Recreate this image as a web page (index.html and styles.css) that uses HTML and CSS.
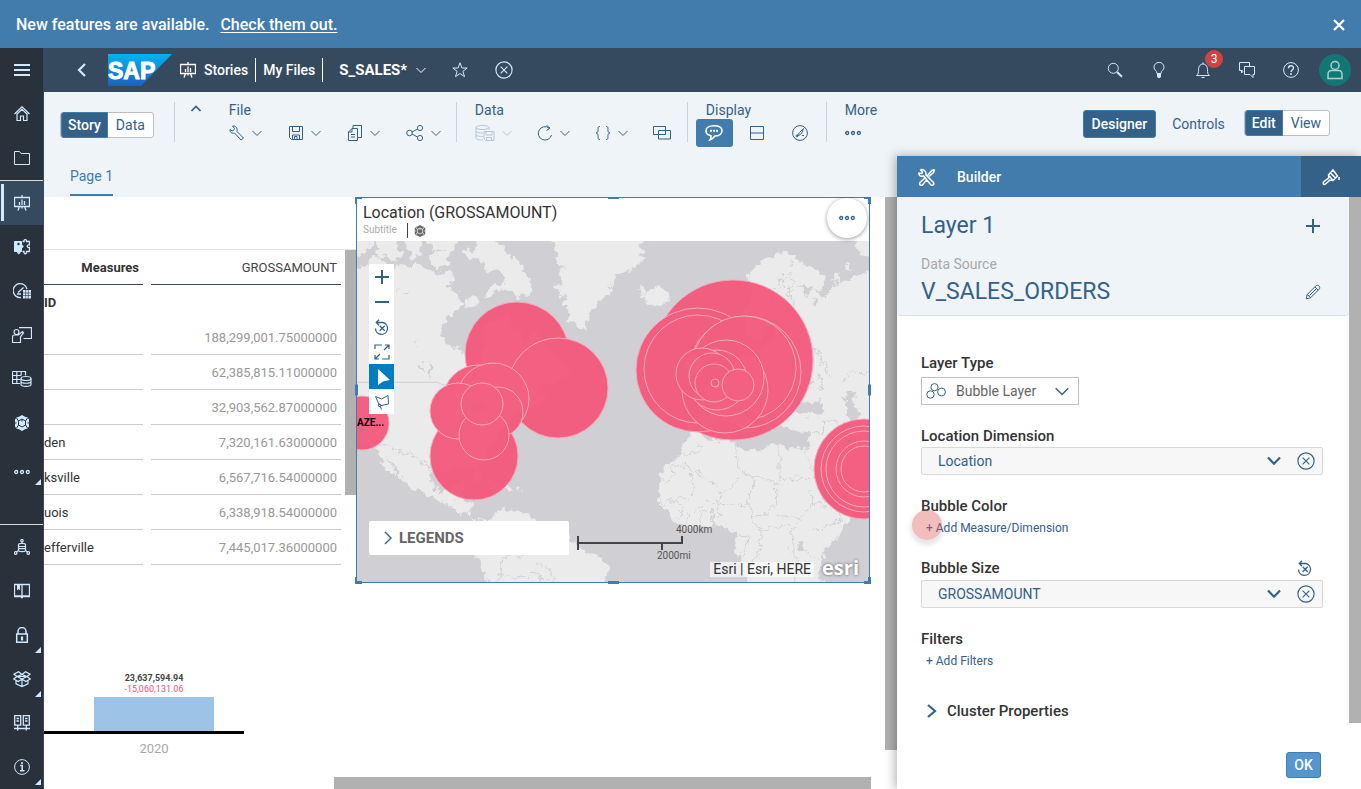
FILE: index.html
```html
<!DOCTYPE html>
<html lang="en">
<head>
<meta charset="utf-8">
<meta name="viewport" content="width=device-width, initial-scale=1">
<title>S_SALES - Stories</title>
<link rel="stylesheet" href="styles.css">
</head>
<body>
<svg class="defs" aria-hidden="true">
  <symbol id="i-menu" viewBox="0 0 16 16"><path d="M0 3h16M0 8h16M0 13h16" stroke-width="2"/></symbol>
  <symbol id="i-home" viewBox="0 0 16 16"><path d="M.5 8 8 .8 15.500 8M3 7.500v7h3.500v-4.500h3v4.500H13v-7M2.500 8.500 8 3.300l5.500 5.200" stroke-width="1.200"/></symbol>
  <symbol id="i-folder" viewBox="0 0 16 16"><path d="M.5 14.500v-13h5l1.500 2h8.500v11z"/></symbol>
  <symbol id="i-story" viewBox="0 0 16 16"><path d="M.5 2.500h15v9H.5zM8 0v2.500M5.500 11.500 4 15.500M10.500 11.500l1.500 4M5.500 7v3M8 4.500V10M10.500 6v4M8 11.500v2" stroke-width="1.300"/></symbol>
  <symbol id="i-puzzle" viewBox="0 0 16 16"><path d="M.5 2.500h7v4c2-1 2.500 2.500 0 2v4H6c.5 3-3 3-2.500 0h-3z" fill="currentColor"/><circle cx="4.500" cy="5" r="1.200" fill="#29313a" stroke="none"/><path d="M8.500 2.500H10c-.5-2.500 3-2.500 2.500 0h3v3.500c-3-1-3 3 0 2.500v4h-3c.5 3-3 3-2.500 0H8.500" stroke-width="1.300"/></symbol>
  <symbol id="i-gauge" viewBox="0 0 18 16"><path d="M8 14.500A7 7 0 1 1 14 6M5 9.500l5.500-5M4 11h4" stroke-width="1.300"/><path d="M10 7h8v8.500h-8z" fill="currentColor" stroke="none"/><path d="M10 10h8M10 12.500h8M12.700 7v9M15.300 7v9" stroke="#29313a" stroke-width=".6"/></symbol>
  <symbol id="i-present" viewBox="0 0 20 16"><g stroke-width="1.200"><circle cx="4.500" cy="5" r="2.500"/><path d="M.5 15.500V10c0-1.500 1-2 2-2h4l4-3.500 1 1.200L8.500 10v5.500zM7 .7h12.500v10.800h-8"/></g></symbol>
  <symbol id="i-tabledb" viewBox="0 0 20 16"><g stroke-width="1.200"><path d="M.5.5h13v4M.5.5v12H8M.5 4.500H9M.5 8.500H8M4.800.5v12M9.200.5v4"/><ellipse cx="14" cy="7.500" rx="5" ry="2"/><path d="M9 7.500v6c0 2.500 10 2.500 10 0v-6M9 10.500c0 2.300 10 2.300 10 0"/></g></symbol>
  <symbol id="i-hex" viewBox="0 0 16 16"><path d="m8 0 3 1.700 2.500.8L15 4.500v7l-1.500 2-2.500.8L8 16l-3-1.700-2.500-.8L1 11.500v-7l1.500-2L5 1.700z" fill="currentColor" stroke="none"/><path class="cut" d="m8 4 3.500 2v4L8 12l-3.500-2V6zM8 4V6.500M4.500 6 2.500 3M11.500 6l2-3M4.500 10l-2 3M11.500 10l2 3M1 8h1.500M13.500 8H15" stroke-width="1"/></symbol>
  <symbol id="i-dots" viewBox="0 0 16 16"><g stroke-width="1.300"><circle cx="2.200" cy="8" r="1.500"/><circle cx="8" cy="8" r="1.500"/><circle cx="13.800" cy="8" r="1.500"/></g></symbol>
  <symbol id="i-dblinks" viewBox="0 0 16 16"><g stroke-width="1.200"><circle cx="8" cy="1.700" r="1.200"/><circle cx="1.700" cy="14" r="1.300"/><circle cx="14.300" cy="14" r="1.300"/><path d="M8 3v1.500M2.500 13 5 11M13.500 13 11 11M4.500 5.500c0-1.500 7-1.500 7 0v6c0 1.500-7 1.500-7 0zM4.500 7.500h7M4.500 9.700h7"/></g></symbol>
  <symbol id="i-book" viewBox="0 0 16 16"><path d="M.5 1.500h15v12H.5zM8 1.500v13M7 14.500h2M0 13h16" stroke-width="1.300"/><path d="M3 1.500h3v6L4.500 6 3 7.500z" fill="currentColor" stroke="none"/></symbol>
  <symbol id="i-lock" viewBox="0 0 16 16"><path d="M2.700 7h10.600v8.300H2.700zM4 7V4.500a4 4 0 0 1 8 0V7" stroke-width="1.500"/><path d="M8 9.500v4" stroke-width="2.200"/></symbol>
  <symbol id="i-box" viewBox="0 0 18 16"><path d="M9 3.500 5.500.7 1 3.200l3 2.300zM9 3.500 12.500.7 17 3.200l-3 2.300zM4 5.500.7 8l4.500 2.500L9 8zM14 5.500 17.300 8l-4.500 2.500L9 8zM3 9.500v3.300l6 2.700 6-2.700V9.500M9 8v7.500M4 5.500h10" stroke-width="1.200"/></symbol>
  <symbol id="i-servers" viewBox="0 0 16 16"><path d="M.7.700h6v9.500h-6zM9.300.7h6v9.500h-6zM3.700 10.500v5M12.300 10.500v5M0 13.500h16M2.500 3.500h2.500M2.500 6h2.500M11 3.500h2.500M11 6h2.500" stroke-width="1.300"/></symbol>
  <symbol id="i-info" viewBox="0 0 16 16"><circle cx="8" cy="8" r="7.400"/><path d="M6.200 6.500h2v5M6 11.800h4.500" stroke-width="1.500"/><circle cx="8" cy="4" r="1.100" fill="currentColor" stroke="none"/></symbol>
  <symbol id="i-down" viewBox="0 0 10 10"><path d="m.5 3 4.500 4.500L9.500 3"/></symbol>
  <symbol id="i-downb" viewBox="0 0 14 10"><path d="m1 1.500 6 6.200 6-6.200" stroke-width="2.200"/></symbol>
  <symbol id="i-star" viewBox="0 0 16 16"><path d="m8 .8 1.900 5.200h5.300l-4.300 3.300 1.600 5.400L8 11.500l-4.500 3.200 1.600-5.400L.8 6h5.300z"/></symbol>
  <symbol id="i-cancel" viewBox="0 0 16 16"><circle cx="8" cy="8" r="7.200"/><path d="m5 5 6 6M11 5l-6 6"/></symbol>
  <symbol id="i-search" viewBox="0 0 16 16"><circle cx="6.300" cy="6.300" r="5"/><path d="m10 10 5 4.700" stroke-width="2"/></symbol>
  <symbol id="i-bulb" viewBox="0 0 16 16"><path d="M6 11.500c0-3-3-3.500-3-6.200a5 5 0 0 1 10 0c0 2.700-3 3.200-3 6.200z"/><path d="M6 12h4v2.500L9 16H7l-1-1.500z" fill="currentColor" stroke="none"/></symbol>
  <symbol id="i-bell" viewBox="0 0 16 16"><path d="M1.500 13.500c2-1.500 2-3 2-6C3.500 4 5.500 2 8 2s4.500 2 4.500 5.500c0 3 0 4.500 2 6zM8 .3V2M6.500 15.500h3"/></symbol>
  <symbol id="i-chat" viewBox="0 0 16 16"><path d="M3.500 9.500v-1h-3v-8h10V4M5.500 4.500h10v8H14v3l-3-3H5.500zM2.500 8.500V11L4 9.500"/></symbol>
  <symbol id="i-help" viewBox="0 0 16 16"><circle cx="8" cy="8" r="7.400"/><path d="M5.500 6.300C5.500 3 10.500 3 10.500 6c0 2-2.500 2-2.500 4" stroke-width="1.400"/><circle cx="8" cy="12" r="1" fill="currentColor" stroke="none"/></symbol>
  <symbol id="i-user" viewBox="0 0 16 20"><circle cx="8" cy="5.500" r="4"/><path d="M1 18.500v-4c0-2.500 1.500-4 3.500-4h7c2 0 3.500 1.500 3.500 4v4z"/></symbol>
  <symbol id="i-wrench" viewBox="0 0 16 16"><path d="M1 4.500C.5 7 3 9 5.500 8l6.500 7 2.500-2L8 6.500C9 3 6.500.5 3.500 1l2 2.500L4.500 5.500 3 6z"/></symbol>
  <symbol id="i-save" viewBox="0 0 16 16"><path d="M1.500 1.500h13v13h-11l-2-2zM4.500 1.500v5h7v-5M4.500 14.500V10h7v4.500M6.500 14v-2.500H9V14"/></symbol>
  <symbol id="i-copy" viewBox="0 0 16 16"><path d="M1.500 7 5 3.500h5.500v12h-9zM1.500 7H5V3.500M4 9.500h4M4 12h4M6 3.500V.5h8.500v12h-4"/></symbol>
  <symbol id="i-share" viewBox="0 0 18 16"><circle cx="3.500" cy="8" r="2.800"/><circle cx="14" cy="3" r="2.600"/><circle cx="14" cy="13" r="2.600"/><path d="m6 7 5.500-3M6 9l5.500 3"/></symbol>
  <symbol id="i-dbsave" viewBox="0 0 20 16"><ellipse cx="7.500" cy="2.500" rx="6.500" ry="2"/><path d="M1 2.500v10.500C1 14.500 4 15 8 15M14 2.500V5M1 6c0 1.500 3 2 7 2M1 9.500c0 1.500 3 2 7 2M9 6.500h10v9H10.500L9 14zM11 6.500v3.500h6V6.500M11.500 15.500v-3h5v3"/></symbol>
  <symbol id="i-refresh" viewBox="0 0 16 16"><path d="M12 3A6.700 6.700 0 1 0 14.500 10M9.500 0.300 13 3l-3.500 2.500"/></symbol>
  <symbol id="i-braces" viewBox="0 0 16 16"><path d="M5 1.500c-3 0-1.500 2.500-2 4.500-.2 1.200-1 2-2 2 1 0 1.800.8 2 2 .5 2-1 4.500 2 4.500M11 1.500c3 0 1.500 2.500 2 4.500.2 1.200 1 2 2 2-1 0-1.800.8-2 2-.5 2 1 4.500-2 4.500"/></symbol>
  <symbol id="i-overlap" viewBox="0 0 18 16"><path d="M.5 1.500h12v8H.5z"/><path d="M5.500 5.500h12v8.500h-12z"/></symbol>
  <symbol id="i-comment" viewBox="0 0 18 16"><path d="M9 .8c5 0 8 2 8 5s-3 5.200-7 5.200c-1.500 1.800-3 3.500-5 4 .8-1 1.200-2.700 1-4.300C2.500 10 1 8.300 1 5.800c0-3 3-5 8-5z" stroke-width="1.600"/><path d="M5 5.800h2M8 5.800h2M11 5.800h2" stroke-width="2"/></symbol>
  <symbol id="i-split" viewBox="0 0 16 16"><path d="M1.500 1.500h13v13h-13z"/><path d="M1.500 8h13" stroke-opacity=".5" stroke-width="2"/></symbol>
  <symbol id="i-compass" viewBox="0 0 16 16"><circle cx="8" cy="8" r="7.400"/><path d="m11.500 3.500-4 4L4.500 12l5-3.500zM3.500 11l2-1.500M10 10.500h2"/></symbol>
  <symbol id="i-tools" viewBox="0 0 18 18"><path d="M2.200 1.500 4.500 4 4 5.500 1 5C.5 7.500 3 9 5.500 8l7.500 9c1.500 1 3.500-.5 2.500-2.500L8 7c.5-3.500-2-6-5-5.500M16.500 1.500l-2.500 1-5 5.500M7 10l-5 4.500c-1 2 .5 3.500 2.500 2.500L9 11.500M16.500 1.500l-1 3-4.500 4" stroke-width="1.500"/></symbol>
  <symbol id="i-brush" viewBox="0 0 18 18"><path d="M6.500 7 11 2l4.500 6-4.500 4.500zM8.500 5l5.500 5.500M7 8l-.5 2L1.500 14c-1 2 .5 3 2 2L8 12l2.500.5M17 9v3" stroke-width="1.500"/></symbol>
  <symbol id="i-plus" viewBox="0 0 16 16"><path d="M8 1v14M1 8h14" stroke-width="2"/></symbol>
  <symbol id="i-minus" viewBox="0 0 16 16"><path d="M1 8h14" stroke-width="2"/></symbol>
  <symbol id="i-pencil" viewBox="0 0 16 16"><path d="m1.200 14.800 1-4.300 9-9c2-1 4.300 1 3.300 3.300l-9 9zM10 3l3.200 3.200M2.500 10.500l3 3M4.500 11.500l6.500-6.500"/></symbol>
  <symbol id="i-bubbles" viewBox="0 0 20 16"><circle cx="8.500" cy="4.200" r="3.600"/><circle cx="4.500" cy="11.500" r="3.700"/><circle cx="15.500" cy="9" r="3.900"/></symbol>
  <symbol id="i-reset" viewBox="0 0 16 16"><path d="M2.500 3.500H9a6 6 0 1 1-7.500 6M5 .8 2.300 3.500 5 6.200M5.700 6.700l5 5M10.700 6.700l-5 5" stroke-width="1.300"/></symbol>
  <symbol id="i-expand" viewBox="0 0 16 16"><path d="M1 5V1h7M15 11v4H8M11 1h4v4M15 1l-5 5M5 15H1v-4M1 15l5-5" stroke-width="1.200"/></symbol>
  <symbol id="i-lasso" viewBox="0 0 16 16"><path d="M1.500 2.500 7.500 5l6.500-3.500.5 8.500L7 11.500l-2-1zM5 10c2 0 2.500 2 1 2.500s-2.500-1-1-2.500zM6 12l1.500 3.500"/></symbol>
</svg>

<div class="banner">
  <p>New features are available. <a href="#features">Check them out.</a></p>
  <button type="button" class="banner-close" aria-label="Close"><svg class="ico12" viewBox="0 0 12 12"><path d="m1 1 10 10M11 1 1 11" stroke-width="2.200"/></svg></button>
</div>

<div class="app">
  <nav class="side" aria-label="Main">
    <div class="side-top">
      <button type="button" aria-label="Menu"><svg class="ico16"><use href="#i-menu"/></svg></button>
      <button type="button" aria-label="Home"><svg class="ico16"><use href="#i-home"/></svg></button>
      <button type="button" aria-label="Files"><svg class="ico16"><use href="#i-folder"/></svg></button>
    </div>
    <div class="side-mid">
      <button type="button" class="current" aria-label="Stories"><svg class="ico16"><use href="#i-story"/></svg></button>
      <button type="button" aria-label="Applications"><svg class="ico16"><use href="#i-puzzle"/></svg></button>
      <button type="button" aria-label="Dashboards"><svg class="ico18"><use href="#i-gauge"/></svg></button>
      <button type="button" aria-label="Boardroom"><svg class="ico20"><use href="#i-present"/></svg></button>
      <button type="button" aria-label="Datasets"><svg class="ico20"><use href="#i-tabledb"/></svg></button>
      <button type="button" aria-label="Modeler"><svg class="ico16"><use href="#i-hex"/></svg></button>
      <button type="button" class="more low" aria-label="More"><svg class="ico16"><use href="#i-dots"/></svg></button>
    </div>
    <div class="side-end">
      <button type="button" aria-label="Connections"><svg class="ico16"><use href="#i-dblinks"/></svg></button>
      <button type="button" aria-label="Catalog"><svg class="ico16"><use href="#i-book"/></svg></button>
      <button type="button" class="more" aria-label="Security"><svg class="ico16"><use href="#i-lock"/></svg></button>
      <button type="button" class="more" aria-label="Transport"><svg class="ico18"><use href="#i-box"/></svg></button>
      <button type="button" aria-label="Systems"><svg class="ico16"><use href="#i-servers"/></svg></button>
      <button type="button" class="more" aria-label="About"><svg class="ico16"><use href="#i-info"/></svg></button>
    </div>
  </nav>

  <div class="main">
    <header class="shell">
      <button type="button" class="back" aria-label="Back"><svg class="ico14" viewBox="0 0 14 14"><path d="m10 1-6 6 6 6" stroke-width="2.200"/></svg></button>
      <svg class="logo" viewBox="0 0 64 32" role="img" aria-label="SAP">
        <defs><linearGradient id="sap" x1="0" y1="0" x2="0" y2="1"><stop offset="0" stop-color="#02b5f0"/><stop offset="1" stop-color="#1f5fc0"/></linearGradient></defs>
        <path d="M0 0h64L33 32H0z" fill="url(#sap)" stroke="none"/>
        <text class="logo-text" x="0" y="25">SAP</text>
      </svg>
      <a class="crumb crumb-icon" href="#stories"><svg class="ico16"><use href="#i-story"/></svg>Stories</a>
      <a class="crumb crumb-next" href="#files">My Files</a>
      <button type="button" class="doc">S_SALES* <svg class="ico10"><use href="#i-down"/></svg></button>
      <button type="button" class="icon-btn fav" aria-label="Favorite"><svg class="ico16"><use href="#i-star"/></svg></button>
      <button type="button" class="icon-btn" aria-label="Close story"><svg class="ico18"><use href="#i-cancel"/></svg></button>
      <div class="shell-end">
        <button type="button" class="icon-btn" aria-label="Search"><svg class="ico16"><use href="#i-search"/></svg></button>
        <button type="button" class="icon-btn" aria-label="Tips"><svg class="ico16"><use href="#i-bulb"/></svg></button>
        <button type="button" class="icon-btn bell" aria-label="Notifications"><svg class="ico16"><use href="#i-bell"/></svg><span class="badge">3</span></button>
        <button type="button" class="icon-btn" aria-label="Discussions"><svg class="ico16"><use href="#i-chat"/></svg></button>
        <button type="button" class="icon-btn" aria-label="Help"><svg class="ico16"><use href="#i-help"/></svg></button>
        <button type="button" class="avatar" aria-label="Profile"><svg class="user"><use href="#i-user"/></svg></button>
      </div>
    </header>

    <div class="toolbar">
      <div class="segment"><button type="button" class="on">Story</button><button type="button">Data</button></div>
      <div class="fold"><button type="button" aria-label="Collapse toolbar"><svg class="ico10" viewBox="0 0 10 10"><path d="M.5 7 5 2.500 9.500 7" stroke-width="1.700"/></svg></button></div>
      <section class="tools tools-file">
        <h2>File</h2>
        <div class="tool-row">
          <button type="button" aria-label="Settings"><svg class="ico16"><use href="#i-wrench"/></svg><svg class="ico10"><use href="#i-down"/></svg></button>
          <button type="button" aria-label="Save"><svg class="ico16"><use href="#i-save"/></svg><svg class="ico10"><use href="#i-down"/></svg></button>
          <button type="button" aria-label="Copy"><svg class="ico16"><use href="#i-copy"/></svg><svg class="ico10"><use href="#i-down"/></svg></button>
          <button type="button" aria-label="Share"><svg class="ico18"><use href="#i-share"/></svg><svg class="ico10"><use href="#i-down"/></svg></button>
        </div>
      </section>
      <section class="tools tools-data">
        <h2>Data</h2>
        <div class="tool-row">
          <button type="button" disabled aria-label="Save data"><svg class="ico20"><use href="#i-dbsave"/></svg><svg class="ico10"><use href="#i-down"/></svg></button>
          <button type="button" aria-label="Refresh"><svg class="ico16"><use href="#i-refresh"/></svg><svg class="ico10"><use href="#i-down"/></svg></button>
          <button type="button" aria-label="Variables"><svg class="ico16"><use href="#i-braces"/></svg><svg class="ico10"><use href="#i-down"/></svg></button>
          <button type="button" aria-label="Linked analysis"><svg class="ico18"><use href="#i-overlap"/></svg></button>
        </div>
      </section>
      <section class="tools tools-display">
        <h2>Display</h2>
        <div class="tool-row">
          <button type="button" class="on" aria-label="Comments"><svg class="ico18"><use href="#i-comment"/></svg></button>
          <button type="button" aria-label="Layout"><svg class="ico16"><use href="#i-split"/></svg></button>
          <button type="button" aria-label="Explore"><svg class="ico16"><use href="#i-compass"/></svg></button>
        </div>
      </section>
      <section class="tools tools-more">
        <h2>More</h2>
        <div class="tool-row"><button type="button" aria-label="More tools"><svg class="ico16"><use href="#i-dots"/></svg></button></div>
      </section>
      <div class="modes">
        <button type="button" class="designer">Designer</button>
        <button type="button" class="controls">Controls</button>
        <div class="segment"><button type="button" class="on">Edit</button><button type="button">View</button></div>
      </div>
    </div>

    <div class="work">
      <main class="stage">
        <div class="tabs"><a href="#page1">Page 1</a></div>
        <div class="canvas">
          <section class="widget grid-widget">
            <table>
              <thead><tr><th class="measures">Measures</th><th class="gross">GROSSAMOUNT</th></tr></thead>
              <tbody>
                <tr class="dim"><th>ID</th><td></td></tr>
                <tr><th></th><td>188,299,001.75000000</td></tr>
                <tr><th></th><td>62,385,815.11000000</td></tr>
                <tr><th></th><td>32,903,562.87000000</td></tr>
                <tr><th>den</th><td>7,320,161.63000000</td></tr>
                <tr><th>ksville</th><td>6,567,716.54000000</td></tr>
                <tr><th>uois</th><td>6,338,918.54000000</td></tr>
                <tr><th>efferville</th><td>7,445,017.36000000</td></tr>
              </tbody>
            </table>
            <div class="grid-scroll"></div>
          </section>

          <figure class="widget chart">
            <div class="plot">
              <strong>23,637,594.94</strong>
              <em>-15,060,131.06</em>
              <div class="bar"></div>
            </div>
            <figcaption>2020</figcaption>
          </figure>

          <section class="widget map-widget">
            <header>
              <h3>Location (GROSSAMOUNT)</h3>
              <div class="sub"><span>Subtitle</span><svg class="ico12 sub-icon"><use href="#i-hex"/></svg></div>
            </header>
            <div class="map">
              <svg class="geo" viewBox="21 153 1536 1023" preserveAspectRatio="xMidYMid slice" role="img" aria-label="World map with bubbles">
                <defs>
                  <filter id="coast" filterUnits="userSpaceOnUse" x="-20" y="120" width="1620" height="1100">
                    <feTurbulence type="fractalNoise" baseFrequency="0.05" numOctaves="3" seed="4"/>
                    <feDisplacementMap in="SourceGraphic" scale="34" xChannelSelector="R" yChannelSelector="G"/>
                  </filter>
                </defs>
                <g class="land" filter="url(#coast)">
                  <path d="M-10 240 45 225 62 205 90 200 115 235 150 225 175 235 195 220 230 235 255 250 300 240 310 270 290 290 320 310 330 335 350 345 310 365 285 390 268 430 292 462 330 482 350 500 362 560 385 565 390 520 405 470 395 430 425 390 480 380 500 420 520 450 560 430 600 480 640 520 660 555 620 580 560 590 590 625 560 650 530 640 500 670 470 700 440 740 415 780 385 830 395 870 380 875 365 835 330 830 290 845 262 840 240 830 240 875 262 905 300 905 320 880 345 880 335 915 345 935 365 940 362 980 390 998 430 985 450 965 465 955 480 965 520 970 560 985 580 1000 660 1040 690 1075 750 1100 778 1130 760 1200 430 1200 400 1150 380 1100 365 1040 400 1000 350 975 300 950 250 922 180 890 150 850 128 815 100 785 98 775 118 815 138 855 130 858 98 820 80 770 -10 740z"/>
                  <path d="M-10 130H68L60 175 30 195 -10 190zM75 130 145 130 135 175 165 190 130 215 85 195zM160 130 210 130 215 190 185 205zM235 200 290 185 300 225 260 240zM225 130 330 130 310 185 250 180zM385 130 455 160 475 195 505 215 525 250 548 290 540 315 515 310 495 320 470 300 440 295 425 320 400 325 415 290 450 285 470 270 455 240 430 235 415 255 400 215 375 205 350 210 340 180 375 185zM350 325 380 320 385 345 355 352z"/>
                  <path d="M610 130 615 185 632 210 615 225 640 235 625 260 640 275 618 285 630 310 650 325 635 340 655 360 660 390 690 412 705 418 712 385 725 355 750 330 780 312 782 280 795 255 850 235 885 205 860 195 885 185 870 170 885 130z"/>
                  <path d="M865 297 885 293 882 308 905 300 935 292 955 305 958 325 935 343 915 352 885 338 892 325 866 322 885 312z"/>
                  <path d="M1195 250 1225 225 1265 200 1290 185 1335 192 1330 215 1375 225 1420 252 1426 275 1415 297 1395 300 1365 285 1345 280 1365 300 1370 325 1385 300 1410 310 1425 330 1440 300 1470 275 1500 270 1510 255 1590 248V780L1500 760 1490 700 1440 710 1420 690 1400 660 1330 690 1330 720 1310 715 1290 690 1260 720 1210 660 1180 660 1220 710 1200 745 1150 700 1110 690 1080 720 1040 745 1020 740 1015 690 1070 670 1040 620 1130 560 1160 500 1210 500 1270 440 1290 390 1265 390 1225 470 1190 430 1180 370 1210 310z"/>
                  <path d="M1020 480 1045 500 1060 545 1020 570 1010 530zM1515 160 1590 150 1590 205 1535 195zM1485 230 1500 222 1500 240 1488 242zM1455 250 1470 245 1468 275 1450 270z"/>
                  <path d="M1025 735 1040 730 1080 750 1155 755 1160 772 1195 780 1230 785 1255 765 1285 770 1315 775 1370 780 1380 830 1400 880 1425 930 1450 960 1505 965 1500 990 1460 1040 1420 1085 1410 1150 1425 1200H1190L1180 1125 1155 1075 1150 1050 1160 1030 1145 1025 1115 1005 1080 1005 1030 1015 980 1000 945 955 930 930 932 860 945 835 990 795 1000 760z"/>
                  <path d="M1300 690 1340 670 1420 680 1590 680V950L1480 950 1410 900 1375 800 1380 730 1330 722z"/>
                  <path d="m400 870 50 15 35 10-30 0-55-15zM455 890l35 5-10 10zM500 899l14 2-2 3zM555 1010l12 12-6 6z"/>
                </g>
                <g class="water" filter="url(#coast)">
                  <path d="M1335 660 1350 635 1385 640 1420 625 1410 650 1430 670 1390 672 1350 675zM1478 620 1500 605 1525 612 1510 630 1510 650 1530 665 1522 695 1500 700 1490 675 1495 655z"/>
                  <path d="M1368 555 1380 565 1385 590 1372 580zM1345 1062 1365 1060 1362 1080 1347 1080zM240 510l8 20-6 35-8-20zM215 515l10 25-4 12-10-28zM200 450l-8 20 2-14zM365 640l20 10 15-15 15 15-20 20-25-10zM135 300l15-2-12 6zM135 430h15zM1383 330l22 0-8 14zM160 310l20-8-2 6z"/>
                </g>
                <g class="borders">
                  <path d="M21 577H262L280 585 330 590"/>
                </g>
                <g class="borders" filter="url(#coast)">
                  <path d="M90 765 130 772 160 795 185 790 210 815 240 830M300 950 320 925M350 975 362 950M440 1180 455 1145 450 1110 480 1095 530 1095M455 1150 500 1165 560 1150 590 1175M620 1180 600 1140 560 1120"/>
                  <path d="M1000 790H1040L1055 770 1040 760M1000 820 1110 895 1108 920M930 870H965V830H1000M1020 830 1028 925 960 928M1108 920 1180 855 1205 855M1155 755 1160 800 1175 850 1205 855 1280 880M1287 775V880M1287 865H1380M1205 860 1208 900 1195 935 1210 980 1245 970 1280 940 1280 890M1110 900 1100 950 1110 980M1095 945 1180 950 1195 940M1055 965H1085V1005M1050 965V1010M1030 965 1070 930 1095 945M1015 1010V970M945 950 975 925 1000 960 980 990M1210 985 1215 1015 1240 1020 1310 1005 1330 1015 1350 985 1280 975M1150 1040H1195V1060L1170 1110M1180 1125H1215L1230 1060 1240 1020M1330 1015 1325 1090 1345 1110 1330 1180M1350 985 1390 935 1380 900M1380 1020 1450 1010 1480 970M1390 935 1480 970M1345 1075 1410 1110"/>
                  <path d="M1230 500 1220 440 1255 390 1265 310 1290 280 1310 250M1290 270 1320 300 1325 360 1345 400M1325 215 1320 250 1330 300M1330 500 1400 480 1440 560M1400 570 1415 555 1415 600M1475 580 1500 545 1560 550M1380 725H1420L1425 690M1420 690 1480 700 1500 760M1290 690 1320 720M1180 560 1230 550 1260 600 1300 580M1110 700 1090 640 1150 600"/>
                </g>
                <g class="bubbles" transform="scale(3) translate(-350 -190)">
                  <circle cx="517" cy="354" r="52"/><circle cx="558" cy="388" r="50"/><circle cx="474" cy="456" r="44"/>
                  <circle cx="478" cy="400" r="35"/><circle cx="493" cy="399" r="36"/><circle cx="498" cy="412" r="25"/>
                  <circle cx="458" cy="411" r="28"/><circle cx="484" cy="435" r="25"/><circle cx="482" cy="404" r="21"/>
                  <circle cx="362" cy="423" r="27"/>
                  <circle cx="733" cy="360" r="80"/><circle cx="698" cy="370" r="62"/><circle cx="698" cy="369" r="54"/>
                  <circle cx="745" cy="372" r="56"/><circle cx="744" cy="368" r="52"/><circle cx="725" cy="390" r="43"/>
                  <circle cx="726" cy="378" r="38"/><circle cx="717" cy="380" r="30"/><circle cx="702" cy="374" r="26"/>
                  <circle cx="712" cy="376" r="23"/><circle cx="714" cy="383" r="19"/>
                  <circle cx="738" cy="385" r="16"/><circle cx="715" cy="383" r="4"/>
                  <circle cx="864" cy="469" r="50"/><circle cx="864" cy="469" r="43"/><circle cx="864" cy="469" r="38"/><circle cx="864" cy="469" r="28"/><circle cx="864" cy="469" r="23"/>
                </g>
              </svg>
              <span class="bubble-label">AZE...</span>
              <div class="map-tools">
                <button type="button" aria-label="Zoom in"><svg class="ico16"><use href="#i-plus"/></svg></button>
                <button type="button" aria-label="Zoom out"><svg class="ico16"><use href="#i-minus"/></svg></button>
                <button type="button" aria-label="Reset"><svg class="ico16"><use href="#i-reset"/></svg></button>
                <button type="button" aria-label="Full extent"><svg class="ico16"><use href="#i-expand"/></svg></button>
                <button type="button" class="on" aria-label="Select"><svg class="ico16" viewBox="0 0 16 16"><path d="M4 0v16l5-3.500 7-1.500z" fill="currentColor" stroke="none"/></svg></button>
                <button type="button" aria-label="Lasso"><svg class="ico16"><use href="#i-lasso"/></svg></button>
              </div>
              <button type="button" class="legends"><svg class="ico14" viewBox="0 0 14 14"><path d="m4 1 6 6-6 6" stroke-width="1.400"/></svg>LEGENDS</button>
              <div class="scale">
                <span class="km">4000km</span>
                <svg viewBox="0 0 106 14"><path d="M1 0v14M1 7h104V0M85 7v7" stroke-width="2"/></svg>
                <span class="mi">2000mi</span>
              </div>
              <div class="credit"><span>Esri | Esri, HERE</span><b>esri</b></div>
            </div>
            <svg class="handles" viewBox="0 0 516 388" preserveAspectRatio="none" aria-hidden="true"><path d="M0 0h7v2H2v5H0zM509 0h7v7h-3V2h-4zM0 381h2v4h5v3H0zM513 381h3v7h-7v-3h4zM253 0h11v2h-11zM253 385h11v3h-11zM0 188h3v11H0zM513 188h3v11h-3z"/></svg>
            <button type="button" class="more-round" aria-label="Widget actions"><svg class="ico16"><use href="#i-dots"/></svg></button>
          </section>
          <div class="hscroll"></div>
          <div class="vscroll"></div>
        </div>
      </main>

      <aside class="panel">
        <header class="panel-head">
          <svg class="ico18"><use href="#i-tools"/></svg><h2>Builder</h2>
          <button type="button" aria-label="Styling"><svg class="ico18"><use href="#i-brush"/></svg></button>
        </header>
        <div class="panel-scroll">
          <div class="panel-body">
            <section class="layer">
              <div class="layer-row"><h3>Layer 1</h3><button type="button" aria-label="Add layer"><svg class="ico16"><use href="#i-plus"/></svg></button></div>
              <p>Data Source</p>
              <div class="layer-row"><h3>V_SALES_ORDERS</h3><button type="button" aria-label="Edit data source"><svg class="ico16"><use href="#i-pencil"/></svg></button></div>
            </section>
            <div class="fields">
              <div class="field">
                <label for="type">Layer Type</label>
                <div class="pick pick-type"><svg class="ico20"><use href="#i-bubbles"/></svg><select id="type"><option>Bubble Layer</option></select><svg class="ico14"><use href="#i-down"/></svg></div>
              </div>
              <div class="field tight">
                <label for="loc">Location Dimension</label>
                <div class="pick"><select id="loc"><option>Location</option></select><svg class="chev"><use href="#i-downb"/></svg><button type="button" aria-label="Remove location"><svg class="ico18"><use href="#i-cancel"/></svg></button></div>
              </div>
              <div class="field color">
                <h4>Bubble Color</h4>
                <button type="button" class="add">+ Add Measure/Dimension</button>
                <span class="pointer"></span>
              </div>
              <div class="field tight size">
                <div class="label-row"><label for="size">Bubble Size</label><button type="button" aria-label="Reset size"><svg class="ico16"><use href="#i-reset"/></svg></button></div>
                <div class="pick"><select id="size"><option>GROSSAMOUNT</option></select><svg class="chev"><use href="#i-downb"/></svg><button type="button" aria-label="Remove size"><svg class="ico18"><use href="#i-cancel"/></svg></button></div>
              </div>
              <div class="field">
                <h4>Filters</h4>
                <button type="button" class="add">+ Add Filters</button>
              </div>
              <button type="button" class="cluster"><svg class="ico14" viewBox="0 0 14 14"><path d="m3 1 7 6-7 6" stroke-width="2.200"/></svg>Cluster Properties</button>
            </div>
          </div>
          <div class="panel-bar"></div>
        </div>
        <footer><button type="button" class="ok">OK</button></footer>
      </aside>
    </div>
  </div>
</div>
</body>
</html>
```
FILE: styles.css
```css
* { box-sizing: border-box; }
html, body { height: 100%; margin: 0; }
body {
  display: flex; flex-direction: column; overflow: hidden;
  font: 14px/20px Roboto, "Noto Sans", sans-serif; color: #333; background: #fff;
}
h2, h3, h4, p, figure { margin: 0; }
button, select { font: inherit; color: inherit; background: none; border: 0; padding: 0; margin: 0; }
button { cursor: pointer; display: flex; align-items: center; justify-content: center; }
a { color: inherit; text-decoration: none; }
svg { fill: none; stroke: currentColor; display: block; flex: none; }
.defs { position: absolute; width: 0; height: 0; }
.cut { stroke: var(--cut, #29313a); fill: none; }
.ico10 { width: 10px; height: 10px; }
.ico12 { width: 12px; height: 12px; }
.ico14 { width: 14px; height: 14px; }
.ico16 { width: 16px; height: 16px; }
.ico18 { width: 18px; height: 18px; }
.ico20 { width: 20px; height: 18px; }

.banner {
  flex: none; height: 48px; padding: 2px 16px 0; display: flex; align-items: center; justify-content: space-between;
  background: #427cac; color: #fff; font-size: 16px; font-weight: 500;
}
.banner a { margin-left: 7px; text-decoration: underline; text-underline-offset: 2px; }

.app { flex: 1; min-height: 0; display: flex; }
.side {
  flex: none; width: 44px; display: flex; flex-direction: column;
  background: #29313a; border-right: 1px solid #354a5f; color: #d1e8ff;
}
.side button { width: 43px; height: 44px; position: relative; }
.side-top { border-bottom: 1px solid #d9d9d9; }
.side-mid { flex: 1; }
.side-end { border-top: 1px solid #d9d9d9; }
.side .current { background: #354a5f; }
.side .current::before { content: ""; position: absolute; left: 1px; top: 3px; width: 3px; height: 37px; background: #d1e8ff; }
.side .more::after {
  content: ""; position: absolute; right: 2px; bottom: 4px;
  border: 3px solid transparent; border-right-color: #d1e8ff; border-bottom-color: #d1e8ff;
}
.side .low { padding-top: 9px; }

.main { flex: 1; min-width: 0; display: flex; flex-direction: column; }
.shell {
  flex: none; height: 44px; padding: 0 10px 0 30px; display: flex; align-items: center;
  background: #354a5f; color: #fff;
}
.back { width: 16px; height: 32px; margin-right: 18px; color: #d1e8ff; }
.logo { width: 64px; height: 32px; margin-right: 8px; }
.logo-text { font: bold 23px "Liberation Sans", Arial, sans-serif; fill: #fff; stroke: #fff; stroke-width: 1; }
.crumb { font-weight: 500; }
.crumb-icon { display: flex; align-items: center; gap: 8px; }
.crumb-next { border: 1px solid #fff; border-width: 0 1px; padding: 2px 7px; margin: 0 16px 0 7px; }
.doc { font-size: 15px; font-weight: 700; gap: 9px; margin-right: 26px; }
.icon-btn { width: 16px; height: 32px; color: #d1e8ff; }
.fav { margin-right: 28px; }
.shell-end { margin-left: auto; display: flex; align-items: center; gap: 28px; }
.bell { position: relative; }
.badge {
  position: absolute; left: 10px; top: -4px; width: 18px; height: 18px; border-radius: 50%;
  background: #d04343; color: #fff; font-size: 12px; line-height: 18px; text-align: center;
}
.avatar { width: 32px; height: 32px; margin-left: -8px; border-radius: 50%; background: #147575; color: #a3d4cb; }
.user { width: 16px; height: 20px; stroke-width: 1.500; }

.toolbar { flex: none; height: 64px; padding: 9px 31px 0 16px; display: flex; align-items: flex-start; background: #eff4f9; color: #346187; }
.segment { display: flex; height: 26px; border: 1px solid #bfbfbf; border-radius: 3px; background: #fff; }
.segment button { padding: 0 8px; }
.segment .on { margin: -1px 0; border: 1px solid #427cac; border-radius: 3px 0 0 3px; background: #346187; color: #fff; font-weight: 500; padding: 0 6px; }
.toolbar > .segment { margin: 11px 20px 0 0; }
.fold { border-left: 1px solid #cbd2d9; height: 40px; margin-top: 1px; padding: 2px 0 0 16px; }
.tools { position: relative; }
.tools h2 { font-size: 14px; line-height: 18px; font-weight: 400; }
.tool-row { display: flex; height: 28px; align-items: center; }
.tool-row button { gap: 7px; height: 28px; }
.tools-file { margin-left: 28px; }
.tools-file .tool-row { gap: 26px; }
.tools-data .tool-row { gap: 25px; }
.tools-data { margin-left: 34px; }
.tools-data button:disabled { opacity: .3; }
.tools-display { margin-left: 25px; }
.tools-display h2 { padding-left: 10px; }
.tools-display .tool-row { gap: 6px; }
.tools-display button { width: 37px; border-radius: 3px; }
.tools-display .on { background: #427cac; color: #fff; }
.tools-more { margin-left: 26px; }
.tools-data::before, .tools-display::before, .tools-more::before {
  content: ""; position: absolute; left: -19px; top: 1px; width: 1px; height: 40px; background: #cbd2d9;
}
.tools-display::before { left: -9px; }
.modes { margin: 9px 0 0 auto; display: flex; }
.designer { height: 28px; padding: 0 8px; border: 1px solid #427cac; border-radius: 3px; background: #346187; color: #fff; font-weight: 500; }
.controls { height: 28px; margin: 0 19px 0 16px; }

.work { flex: 1; min-height: 0; display: flex; }
.stage { flex: 1; min-width: 0; display: flex; flex-direction: column; }
.tabs { flex: none; height: 41px; padding-left: 26px; background: #eff4f9; display: flex; }
.tabs a { height: 40px; padding-top: 10px; border-bottom: 2px solid #427cac; color: #427cac; }
.canvas { flex: 1; position: relative; overflow: hidden; }
.widget { position: absolute; }
.vscroll { position: absolute; right: 0; top: 0; width: 12px; height: 553px; background: #b1b1b1; }
.hscroll { position: absolute; left: 290px; right: 26px; bottom: 0; height: 12px; background: #b1b1b1; }

.grid-widget { left: 0; top: 52px; display: flex; border-top: 1px solid #e5e5e5; font-size: 13px; }
.grid-scroll { width: 11px; height: 245px; margin-left: -4px; background: #b1b1b1; }
.grid-widget table { border-collapse: separate; border-spacing: 8px 0; margin-left: -8px; }
.grid-widget th, .grid-widget td { height: 35px; padding: 2px 0 0; border-bottom: 1px solid #ccc; text-align: right; }
.grid-widget th { width: 99px; font-weight: 400; text-align: left; }
.grid-widget td, .grid-widget .gross { width: 190px; padding-right: 4px; color: #999; }
.grid-widget thead th { border-bottom-color: #354a5f; text-align: right; }
.grid-widget .measures { font-weight: 700; padding-right: 4px; }
.grid-widget .gross { color: #444; }
.grid-widget .dim th { font-weight: 700; border-bottom-color: transparent; }
.grid-widget .dim td { border-bottom-color: transparent; }

.chart { left: 0; top: 476px; width: 200px; }
.plot { padding: 0 30px 0 50px; border-bottom: 3px solid #000; font-size: 9px; line-height: 11px; text-align: center; }
.plot strong, .plot em { display: block; font-style: normal; }
.plot strong { color: #444; }
.plot em { color: #f0547d; }
.bar { height: 34px; margin-top: 2px; background: #9dc3e6; }
.chart figcaption { padding: 5px 30px 0 50px; text-align: center; font-size: 13px; color: #aaa; }

.map-widget { left: 312px; top: 0; width: 514px; border: 1px solid #427cac; background: #fff; }
.map-widget > header { height: 43px; padding: 5px 6px 0; }
.map-widget h3 { font-size: 16px; line-height: 20px; font-weight: 400; }
.sub { display: flex; height: 15px; font-size: 10px; line-height: 14px; color: #aaa; }
.sub span { padding-right: 10px; border-right: 1px solid #444; }
.sub-icon { --cut: #fff; margin: 2px 0 0 6px; color: #666; }
.handles { position: absolute; left: -2px; top: -1px; width: 516px; height: 387px; fill: #427cac; stroke: none; pointer-events: none; }
.more-round {
  position: absolute; right: 2px; top: 0; width: 40px; height: 40px; border-radius: 50%;
  background: #fff; color: #346187; box-shadow: 0 1px 4px rgba(0, 0, 0, .4);
}
.map { position: relative; height: 341px; overflow: hidden; background: #d0cfd4; }
.geo { width: 100%; height: 100%; }
.land { fill: #ebebeb; stroke: #ebebeb; stroke-width: 2; stroke-linejoin: round; }
.water { fill: #d0cfd4; stroke: none; }
.borders { stroke: #d0d0d3; stroke-width: 3; stroke-linejoin: round; }
.bubbles { fill: #f45579; stroke: #f9a4b7; stroke-width: 1; opacity: .92; }
.bubble-label { position: absolute; left: 0; top: 176px; font-size: 10px; line-height: 12px; font-weight: 700; color: #000; }
.map-tools { position: absolute; left: 12px; top: 23px; background: #fff; color: #346187; }
.map-tools button { width: 25px; height: 25px; }
.map-tools .on { background: #007cc0; color: #fff; }
.legends {
  position: absolute; left: 12px; top: 280px; width: 200px; height: 34px; padding-left: 12px; gap: 4px;
  justify-content: flex-start; background: #fff; border-radius: 2px; font-size: 15px; font-weight: 700; color: #666;
}
.legends svg { color: #346187; }
.scale { position: absolute; left: 220px; top: 283px; width: 136px; font-size: 10px; line-height: 12px; color: #555; }
.scale svg { width: 106px; height: 14px; color: #444; }
.scale .km, .scale .mi { display: block; }
.scale .km { padding-left: 99px; }
.scale .mi { padding-left: 80px; }
.credit { position: absolute; right: 10px; bottom: 2px; display: flex; align-items: flex-end; gap: 8px; color: #333; }
.credit span { padding: 0 3px; line-height: 15px; background: rgba(255, 255, 255, .65); margin-bottom: 3px; }
.credit b { font: bold 20px/24px "Open Sans", sans-serif; color: #fff; text-shadow: 0 0 3px #555; }

.panel { flex: none; width: 464px; position: relative; display: flex; flex-direction: column; background: #fff; box-shadow: -2px 0 10px rgba(0, 0, 0, .3); }
.panel-head { flex: none; height: 41px; display: flex; align-items: center; padding-left: 21px; background: #427cac; color: #fff; }
.panel-head h2 { margin-left: 21px; font-size: 14px; font-weight: 500; }
.panel-head button { width: 60px; height: 41px; margin-left: auto; background: #346187; }
.panel-scroll { flex: 1; min-height: 0; display: flex; }
.panel-body { flex: 1; min-width: 0; }
.panel-bar { width: 12px; height: 526px; background: #b1b1b1; }
.layer { padding: 14px 28px 9px 24px; background: #eff4f9; border-bottom: 1px solid #d1e0ee; border-radius: 0 0 4px 4px; color: #346187; }
.layer p { margin: 13px 0 4px; color: #a8a8a8; }
.layer-row { display: flex; align-items: center; justify-content: space-between; }
.layer h3 { font-size: 23px; line-height: 30px; font-weight: 400; }
.layer p + .layer-row { height: 28px; }
.fields { padding: 37px 26px 0 24px; }
.field { position: relative; margin-bottom: 21px; }
.color { margin-bottom: 20px; }
.field label, .field h4 { display: block; font-size: 15px; line-height: 20px; font-weight: 500; color: #333; }
.pick { display: flex; align-items: center; height: 28px; padding: 0 7px 0 16px; border: 1px solid #d9d9d9; border-radius: 2px; background: #f7f7f7; color: #346187; }
.pick select { flex: 1; min-width: 0; height: 26px; appearance: none; outline: 0; }
.chev { width: 14px; height: 10px; margin-right: 16px; }
.pick-type { width: 158px; margin-top: 4px; padding: 0 9px 0 4px; border-color: #bfbfbf; border-radius: 0; background: #fff; gap: 10px; }
.pick-type select { color: #666; }
.tight .pick { margin-top: 1px; }
.size .pick { margin-top: 2px; }
.label-row { display: flex; justify-content: space-between; padding-right: 10px; }
.label-row button { color: #346187; }
.add { margin: 2px 0 0 5px; font-size: 12px; line-height: 20px; color: #346187; }
.pointer {
  position: absolute; left: -9px; top: 14px; width: 30px; height: 30px; border-radius: 50%;
  background: rgba(220, 90, 90, .4); box-shadow: 0 3px 4px 2px rgba(0, 0, 0, .1);
}
.cluster { margin-top: 30px; padding-left: 4px; gap: 8px; font-size: 15px; font-weight: 500; color: #333; }
.cluster svg { color: #346187; }
.panel footer { position: absolute; right: 40px; bottom: 11px; }
.ok { width: 35px; height: 26px; border: 1px solid #427cac; border-radius: 3px; background: #5496cd; color: #fff; font-weight: 500; }
```
